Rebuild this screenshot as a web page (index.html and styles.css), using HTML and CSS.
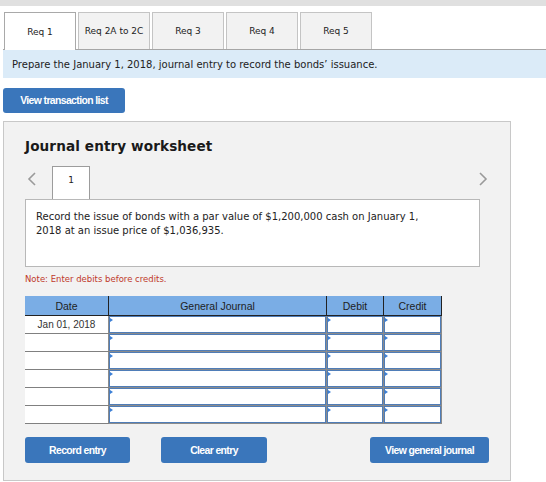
FILE: index.html
```html
<!DOCTYPE html>
<html>
<head>
<meta charset="utf-8">
<link rel="stylesheet" href="styles.css">
</head>
<body>
<div class="topbar"></div>
<div class="wrap">
  <div class="tabs">
    <div class="tab active">Req 1</div>
    <div class="tab">Req 2A to 2C</div>
    <div class="tab">Req 3</div>
    <div class="tab">Req 4</div>
    <div class="tab">Req 5</div>
  </div>
  <div class="instr">Prepare the January 1, 2018, journal entry to record the bonds’ issuance.</div>
  <div class="btn btn-list">View transaction list</div>
  <div class="panel">
    <div class="title">Journal entry worksheet</div>
    <div class="nav">
      <span class="arrow left"><svg width="10" height="14" viewBox="0 0 10 14"><path d="M8 1 L2 7 L8 13" fill="none" stroke="#9a9a9a" stroke-width="1.6"/></svg></span>
      <div class="numtab">1</div>
      <span class="arrow right"><svg width="10" height="14" viewBox="0 0 10 14"><path d="M2 1 L8 7 L2 13" fill="none" stroke="#9a9a9a" stroke-width="1.6"/></svg></span>
    </div>
    <div class="desc">Record the issue of bonds with a par value of $1,200,000 cash on January 1, 2018 at an issue price of $1,036,935.</div>
    <div class="note">Note: Enter debits before credits.</div>
    <table class="jt">
      <thead>
        <tr><th class="c-date">Date</th><th class="c-gj">General Journal</th><th class="c-dr">Debit</th><th class="c-cr">Credit</th></tr>
      </thead>
      <tbody>
        <tr><td class="date">Jan 01, 2018</td><td class="in"><div class="box"></div></td><td class="in"><div class="box"></div></td><td class="in"><div class="box"></div></td></tr>
        <tr><td class="date"></td><td class="in"><div class="box"></div></td><td class="in"><div class="box"></div></td><td class="in"><div class="box"></div></td></tr>
        <tr><td class="date"></td><td class="in"><div class="box"></div></td><td class="in"><div class="box"></div></td><td class="in"><div class="box"></div></td></tr>
        <tr><td class="date"></td><td class="in"><div class="box"></div></td><td class="in"><div class="box"></div></td><td class="in"><div class="box"></div></td></tr>
        <tr><td class="date"></td><td class="in"><div class="box"></div></td><td class="in"><div class="box"></div></td><td class="in"><div class="box"></div></td></tr>
        <tr><td class="date"></td><td class="in"><div class="box"></div></td><td class="in"><div class="box"></div></td><td class="in"><div class="box"></div></td></tr>
      </tbody>
    </table>
    <div class="actions">
      <div class="btn btn-rec">Record entry</div>
      <div class="btn btn-clr">Clear entry</div>
      <div class="btn btn-vgj">View general journal</div>
    </div>
  </div>
</div>
</body>
</html>
```
FILE: styles.css
```css
html, body {
  margin: 0;
  padding: 0;
  background: #fff;
  font-family: "DejaVu Sans", Verdana, sans-serif;
  color: #222;
}
.topbar {
  height: 6px;
  background: #e0e0e0;
}
.wrap {
  padding-left: 3px;
  width: 543px;
}
.tabs {
  display: flex;
  margin-top: 6px;
  padding-left: 1px;
  gap: 1px;
  position: relative;
  z-index: 1;
}
.tab {
  width: 70px;
  height: 36px;
  border: 1px solid #c4c4c4;
  border-bottom: none;
  background: #f2f2f2;
  font-size: 9px;
  display: flex;
  align-items: center;
  justify-content: center;
  color: #222;
}
.tab + .tab { margin-left: 1px; }
.tab.active {
  background: #fff;
  border-color: #a9a9a9;
  height: 37px;
  margin-bottom: -1px;
}
.instr {
  border-top: 1px solid #a6a6a6;
  background: #dbebf8;
  height: 28px;
  line-height: 29px;
  padding-left: 9px;
  font-size: 10px;
  color: #222;
}
.btn {
  background: #3a76bb;
  color: #fff;
  font-family: "Liberation Sans", Arial, sans-serif;
  font-weight: bold;
  font-size: 10.4px;
  letter-spacing: -0.6px;
  border-radius: 3px;
  display: flex;
  align-items: center;
  justify-content: center;
  height: 25px;
}
.btn-list {
  width: 122px;
  margin-top: 10px;
}
.panel {
  margin-top: 8px;
  border: 1px solid #c8c8c8;
  background: #f2f2f2;
  padding-left: 21px;
  box-sizing: border-box;
  width: 508px;
  height: 360px;
}
.title {
  font-weight: bold;
  font-size: 13.6px;
  margin-top: 16px;
  color: #1a1a1a;
  letter-spacing: 0.1px;
}
.nav {
  display: flex;
  align-items: flex-start;
  height: 33px;
  margin-top: 12px;
  position: relative;
  width: 455px;
}
.arrow {
  display: block;
  height: 14px;
}
.arrow.left {
  margin-left: 2px;
  margin-top: 5px;
}
.arrow.right {
  margin-left: auto;
  margin-right: -8px;
  margin-top: 5px;
}
.numtab {
  margin-left: 15px;
  width: 38px;
  height: 33px;
  box-sizing: border-box;
  border: 1px solid #9c9c9c;
  border-bottom: none;
  background: #fff;
  font-size: 9px;
  text-align: center;
  line-height: 26px;
  position: relative;
  z-index: 1;
  margin-bottom: -1px;
}
.desc {
  width: 455px;
  height: 68px;
  box-sizing: border-box;
  border: 1px solid #b8b8b8;
  background: #fff;
  padding: 10px 40px 0 10px;
  font-size: 10px;
  line-height: 14px;
  color: #222;
}
.note {
  margin-top: 6px;
  font-size: 8.5px;
  color: #c0392b;
  height: 12px;
  line-height: 12px;
}
.jt {
  margin-top: 11px;
  border-collapse: collapse;
  font-family: "Liberation Sans", Arial, sans-serif;
  font-size: 10.5px;
  color: #333;
}
.jt th {
  background: #7aade5;
  height: 19px;
  font-weight: normal;
  padding: 0;
  border-left: 1px solid #222;
  border-bottom: 1px solid #222;
  color: #1e1e1e;
}
.jt th:first-child { border-left: none; }
.jt th:last-child { border-right: 1px solid #222; }
.c-date { width: 83px; }
.c-gj { width: 217px; }
.c-dr { width: 56px; }
.c-cr { width: 57px; }
.jt td {
  padding: 0;
  height: 17px;
}
.jt td.date {
  background: #fff;
  border-bottom: 1px solid #808080;
  text-align: center;
  vertical-align: middle;
  font-size: 10px;
}
.jt td.in {
  border: 1px solid #8b8b8b;
  background: #fff;
}
.box {
  height: 15px;
  border: 1px solid #4f7db8;
  position: relative;
  background: #fff;
}
.box::before {
  content: "";
  position: absolute;
  left: 0;
  top: 1px;
  border-left: 3px solid #3b7fd6;
  border-top: 2px solid transparent;
  border-bottom: 2px solid transparent;
}
.actions {
  display: flex;
  margin-top: 13px;
}
.btn-rec { width: 105px; height: 26px; }
.btn-clr { width: 106px; height: 26px; margin-left: 31px; }
.btn-vgj { width: 119px; height: 26px; margin-left: 103px; }
```
